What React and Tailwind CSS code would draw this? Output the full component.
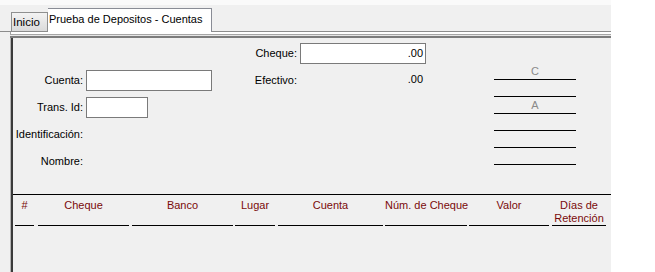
import React from "react";

const columns = [
  { label: "#", w: "w-[19px]", mr: "mr-[4px]" },
  { label: "Cheque", w: "w-[91px]", mr: "mr-[3px]" },
  { label: "Banco", w: "w-[101px]", mr: "mr-[2px]" },
  { label: "Lugar", w: "w-[40px]", mr: "mr-[3px]" },
  { label: "Cuenta", w: "w-[105px]", mr: "mr-[2px]" },
  { label: "Núm. de Cheque", w: "w-[82px]", mr: "mr-[2px]", nowrap: true },
  { label: "Valor", w: "w-[80px]", mr: "mr-[3px]" },
  { label: "Días de Retención", w: "w-[54px]", mr: "mr-0" },
];

function Label({ children }) {
  return <div className="flex items-center justify-end pr-[3px] whitespace-nowrap">{children}</div>;
}

function Box({ className, value }) {
  return (
    <div
      className={`h-[21px] bg-white border border-[#7a7a7a] flex items-center justify-end pr-[2px] ${className}`}
    >
      {value}
    </div>
  );
}

export default function App() {
  return (
    <div className="w-[655px] h-[272px] bg-white overflow-hidden font-['Liberation_Sans',Arial,sans-serif] text-[11px] text-black leading-[13px]">
      <div className="w-[611px] h-full bg-[#f0f0f0] flex flex-col">
        <div className="h-[5px] bg-[#fafafa]" />

        {/* tabs */}
        <div className="h-[27px] flex items-end pl-[11px] border-b border-[#8c8c8c]">
          <div className="w-[37px] h-[19px] pl-[1px] pt-[3px] border border-b-0 border-[#8e8f8f] bg-gradient-to-b from-[#f3f3f3] to-[#dadada] text-[11.5px] leading-[13px]">
            Inicio
          </div>
          <div className="relative -mb-px w-[164px] h-[24px] pl-[1px] pt-[4px] border border-b-0 border-l-0 border-[#898c95] bg-white text-[11px] leading-[13px] whitespace-nowrap">
            Prueba de Depositos - Cuentas
          </div>
        </div>

        {/* page frame lines */}
        <div className="ml-[10px] h-[2px] bg-white border-l border-[#a0a0a0]" />
        <div className="ml-[10px] h-px bg-[#a6a6a6]" />
        <div className="ml-[10px] h-px bg-[#e6e6e6]" />
        <div className="ml-[10px] h-[2px] bg-[#7c7c7c]" />

        {/* content */}
        <div className="ml-[10px] flex-1 flex flex-col border-l border-[#b4b4b4]">
          <div className="flex-1 flex flex-col border-l-2 border-[#3a3a3a]">
            <div className="h-[156px] flex">
              <div className="w-[412px] pt-[5px] grid grid-cols-[73px_167px_47px_126px] auto-rows-[21px] gap-y-[6px]">
                <div />
                <div />
                <Label>Cheque:</Label>
                <Box value=".00" />

                <Label>Cuenta:</Label>
                <div>
                  <Box className="w-[126px]" />
                </div>
                <Label>Efectivo:</Label>
                <div className="flex items-center justify-end pr-[3px] -mt-[3px]">.00</div>

                <Label>Trans. Id:</Label>
                <div>
                  <Box className="w-[62px]" />
                </div>
                <div />
                <div />

                <Label>Identificación:</Label>
                <div />
                <div />
                <div />

                <Label>Nombre:</Label>
                <div />
                <div />
                <div />
              </div>

              <div className="ml-[69px] w-[82px] pt-[25px] flex flex-col">
                {["C", "", "A", "", "", ""].map((t, i) => (
                  <div
                    key={i}
                    className="h-[17px] border-b border-black flex items-end justify-center pb-[1px] text-[#8a8a8a]"
                  >
                    {t}
                  </div>
                ))}
              </div>
            </div>

            {/* table header */}
            <div className="flex-1 border-t border-black">
              <div className="flex pl-[2px]">
                {columns.map((c) => (
                  <div
                    key={c.label}
                    className={`${c.w} ${c.mr} h-[31px] pt-[4px] border-b border-black text-center text-[#7a0a0a] ${
                      c.nowrap ? "whitespace-nowrap" : ""
                    }`}
                  >
                    {c.label}
                  </div>
                ))}
              </div>
            </div>
          </div>
        </div>
      </div>
    </div>
  );
}
